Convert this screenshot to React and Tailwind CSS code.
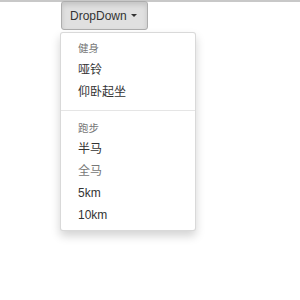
import React from "react";

const font = { fontFamily: '"Liberation Sans", "Noto Sans CJK SC", sans-serif' };

const Header = ({ children, className = "" }) => (
  <div className={`px-[17px] pt-[2.5px] text-[10.5px] leading-[14.5px] text-[#777] ${className}`}>{children}</div>
);

const Item = ({ children, muted }) => (
  <a
    href="#"
    className={`block px-[17px] py-[2.5px] text-[12px] leading-[17px] ${muted ? "text-[#777]" : "text-[#333]"}`}
  >
    {children}
  </a>
);

export default function App() {
  return (
    <div className="min-h-[300px] w-[300px] border-t-[2px] border-[#c8c8c8] bg-white" style={font}>
      <div className="pl-[60px]">
        {/* Toggle button (open state) */}
        <button className="ml-[1px] -mt-[1px] flex h-[29px] items-center rounded-[3px] border border-[#adadad] bg-[#e0e0e0] pl-[8px] pr-[10px] text-[12px] text-[#333] shadow-[inset_0_3px_5px_rgba(0,0,0,0.125)]">
          DropDown
          <span className="ml-[4px] inline-block h-0 w-0 border-x-[3.5px] border-t-[3.5px] border-x-transparent border-t-[#333]"></span>
        </button>

        {/* Menu */}
        <div className="mt-[2px] w-[136px] rounded-[3px] border border-black/15 bg-white pt-[5px] pb-[4px] shadow-[0_5px_10px_rgba(0,0,0,0.175)]">
          <Header className="pb-[4.5px]">健身</Header>
          <Item>哑铃</Item>
          <Item>仰卧起坐</Item>
          <div className="mt-[6px] mb-[8px] h-px bg-[#e5e5e5]"></div>
          <Header className="pb-[2.5px]">跑步</Header>
          <Item>半马</Item>
          <Item muted>全马</Item>
          <Item>5km</Item>
          <Item>10km</Item>
        </div>
      </div>
    </div>
  );
}
